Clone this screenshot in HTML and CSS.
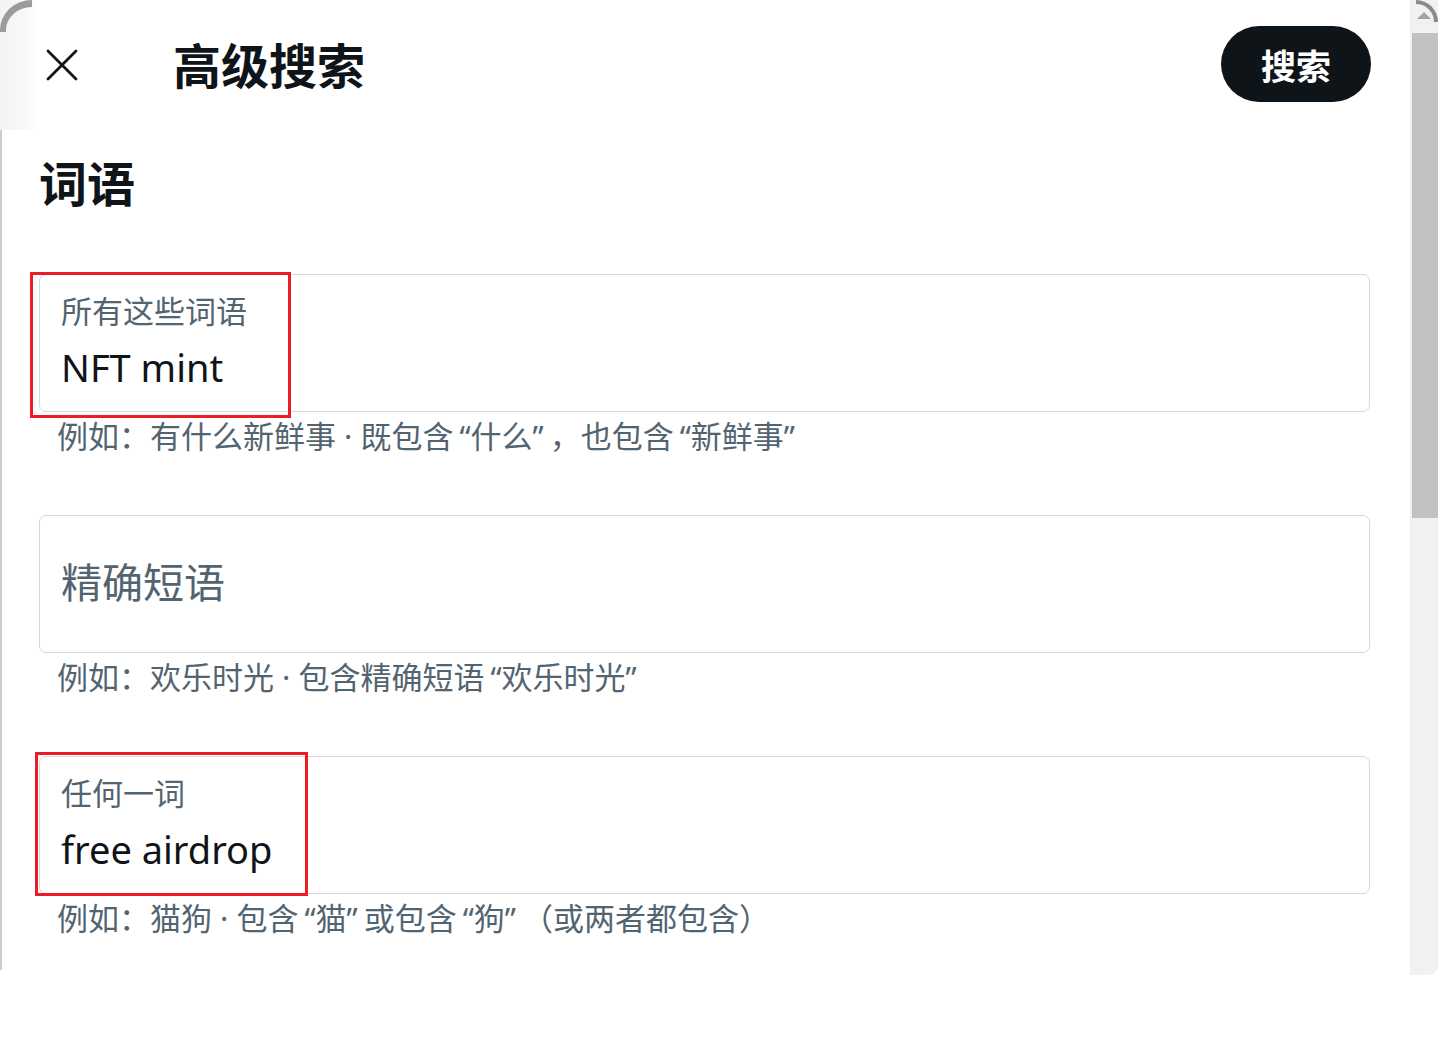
FILE: index.html
```html
<!DOCTYPE html>
<html lang="zh-CN">
	<head>
		<meta charset="utf-8">
		<title>高级搜索</title>
		<link rel="stylesheet" href="styles.css">
	</head>
	<body>
		<div class="frame">
			<div class="dialog">
				<span class="corner corner-left"></span>
				<header class="topbar">
					<button class="close-btn" aria-label="关闭">
						<svg width="32" height="32" viewBox="0 0 32 32">
							<path d="M2 2 L30 30 M30 2 L2 30" stroke="#0f1419" stroke-width="2.8" stroke-linecap="round" fill="none"/>
						</svg>
					</button>
					<h1 class="title">高级搜索</h1>
					<button class="search-btn">搜索</button>
				</header>

				<main class="content">
					<h2 class="section-title">词语</h2>

					<div class="field-group">
						<div class="field">
							<span class="field-label">所有这些词语</span>
							<span class="field-value">NFT mint</span>
							<span class="mark mark-first"></span>
						</div>
						<p class="hint">例如：有什么新鲜事 · 既包含<q>什么</q>，也包含<q>新鲜事</q></p>
					</div>

					<div class="field-group">
						<div class="field field-empty">
							<span class="field-placeholder">精确短语</span>
						</div>
						<p class="hint">例如：欢乐时光 · 包含精确短语<q>欢乐时光</q></p>
					</div>

					<div class="field-group">
						<div class="field">
							<span class="field-label">任何一词</span>
							<span class="field-value">free airdrop</span>
							<span class="mark mark-third"></span>
						</div>
						<p class="hint">例如：猫狗 · 包含<q>猫</q>或包含<q>狗</q>（或两者都包含）</p>
					</div>
				</main>
			</div>

			<div class="scrollbar">
				<span class="corner corner-right"></span>
				<div class="scroll-arrow"></div>
				<div class="scroll-thumb"></div>
			</div>
		</div>
	</body>
</html>
```

FILE: styles.css
```css
body {
	margin: 0;
	background-color: #fff;
	font-family: 'Noto Sans', 'Noto Sans CJK SC', sans-serif;
	color: #0f1419;
}

.frame {
	display: flex;
	width: 1438px;
	height: 975px;
}

/* Dialog */

.dialog {
	position: relative;
	width: 1410px;
	background-color: #fff;
	border-top-left-radius: 26px;
}

.corner {
	position: absolute;
	top: 0;
	width: 28px;
	height: 28px;
	pointer-events: none;
}

.corner-left {
	left: 0;
	width: 32px;
	height: 32px;
	border-top-left-radius: 32px 30px;
	border-top: 7px solid #9b9b9b;
	border-left: 6px solid #9b9b9b;
	box-sizing: border-box;
	z-index: 2;
}

.topbar {
	display: flex;
	align-items: center;
	height: 130px;
	padding: 0 39px 0 46px;
	background-image: linear-gradient(to right, #f4f4f5, #f8f8f9 26px, #fff 38px);
}

.close-btn {
	display: flex;
	width: 32px;
	height: 32px;
	padding: 0;
	border: 0;
	background: none;
	margin-right: 95px;
}

.title {
	flex: 1;
	margin: 0;
	font-size: 48px;
	line-height: 58px;
	font-weight: 700;
	padding-top: 2px;
}

.search-btn {
	width: 150px;
	height: 76px;
	border: 0;
	border-radius: 38px;
	background-color: #0f1419;
	color: #fff;
	font-family: inherit;
	font-size: 35px;
	font-weight: 700;
	margin-top: -2px;
}

/* Form */

.content {
	height: 840px;
	padding: 25px 40px 0 39px;
	border-left: 2px solid #d3cac8;
	box-sizing: border-box;
}

.section-title {
	margin: 0 0 61px -2px;
	font-size: 48px;
	line-height: 58px;
	font-weight: 700;
}

.field-group {
	margin-bottom: 60px;
}

.field {
	position: relative;
	display: flex;
	flex-direction: column;
	height: 138px;
	box-sizing: border-box;
	margin-left: -2px;
	padding: 18px 21px 0;
	border: 1px solid #cfd9de;
	border-radius: 7px;
}

.field-label {
	font-size: 31px;
	line-height: 37px;
	color: #536471;
}

.field-value {
	margin-top: 14px;
	font-size: 38px;
	line-height: 46px;
	color: #0f1419;
}

.field-empty {
	justify-content: center;
	padding-top: 0;
}

.field-placeholder {
	font-size: 41px;
	line-height: 50px;
	color: #536471;
	margin-top: -4px;
}

.hint {
	margin: 6px 0 0 16px;
	font-size: 31px;
	line-height: 37px;
	color: #536471;
	text-spacing-trim: space-all;
}

.hint q {
	quotes: "“" "”";
}

.hint q::before {
	margin-left: 6px;
}

.hint q::after {
	margin-right: 6px;
}

/* red annotation frames */
.mark {
	position: absolute;
	border: 3px solid #ec1c24;
	box-sizing: border-box;
	pointer-events: none;
}

.mark-first {
	left: -10px;
	top: -3px;
	width: 261px;
	height: 146px;
}

.mark-third {
	left: -5px;
	top: -5px;
	width: 273px;
	height: 144px;
}

/* Scrollbar */

.scrollbar {
	position: relative;
	display: flex;
	flex-direction: column;
	width: 28px;
	background-color: #f1f1f1;
	border-bottom-right-radius: 10px;
}

.corner-right {
	right: 0;
	width: 22px;
	height: 22px;
	border-top-right-radius: 22px;
	border-top: 4px solid #8a8a8a;
	border-right: 4px solid #8a8a8a;
	box-sizing: border-box;
}

.scroll-arrow {
	height: 33px;
	display: flex;
	justify-content: center;
	align-items: center;
}

.scroll-arrow::before {
	content: '';
	width: 0;
	height: 0;
	border-style: solid;
	border-width: 0 7px 7px 7px;
	border-color: transparent transparent #a3a3a3 transparent;
	margin-top: -2px;
}

.scroll-thumb {
	height: 485px;
	margin-left: 2px;
	background-color: #c1c1c1;
}
```
